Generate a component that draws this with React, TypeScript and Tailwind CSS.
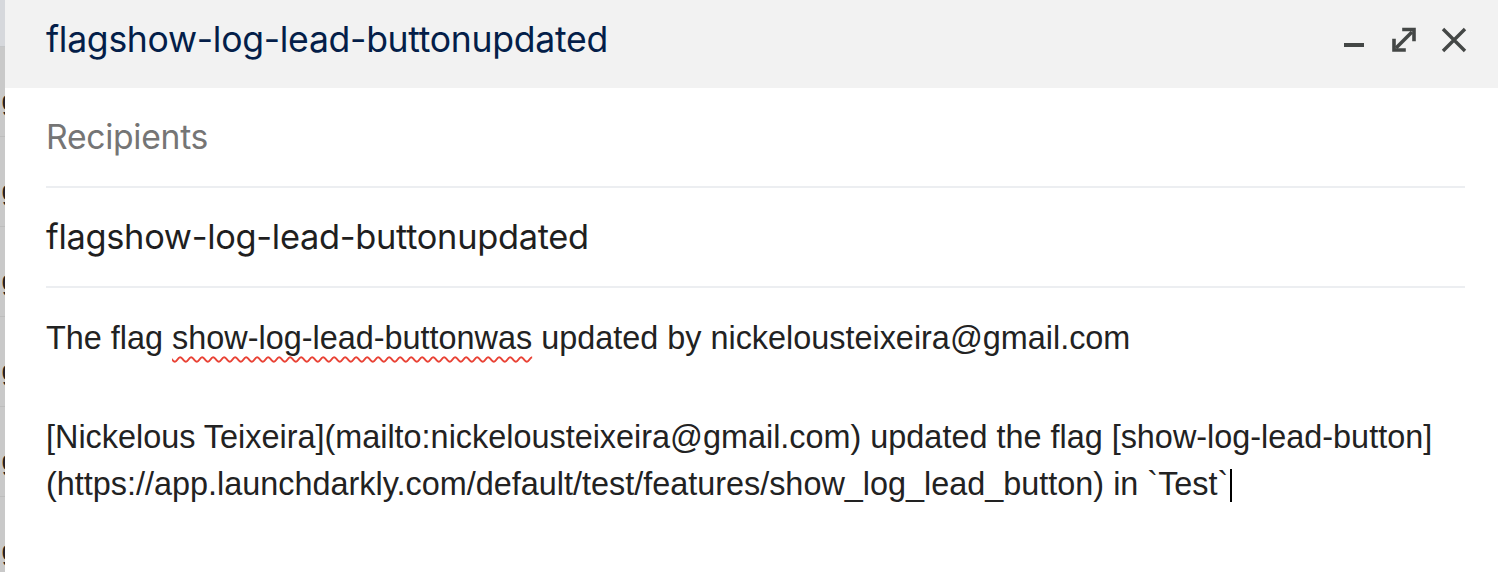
const strip = [0, 1, 2, 3, 4, 5];

function Minimize() {
  return (
    <svg width="28" height="28" viewBox="0 0 28 28">
      <rect x="4" y="17" width="20" height="4" fill="#444746" />
    </svg>
  );
}

function Expand() {
  return (
    <svg width="28" height="28" viewBox="0 0 28 28" fill="none" stroke="#444746" strokeWidth="3.6">
      <path d="M6 22 L22 6" />
      <path d="M14 3.5 H24 V13.5" strokeLinecap="square" />
      <path d="M4 14.5 V24 H14" strokeLinecap="square" />
    </svg>
  );
}

function Close() {
  return (
    <svg width="28" height="28" viewBox="0 0 28 28" fill="none" stroke="#444746" strokeWidth="3.4">
      <path d="M3 3 L25 25 M25 3 L3 25" />
    </svg>
  );
}

export default function App() {
  return (
    <div className="flex w-[1498px] h-[572px] overflow-hidden bg-white">
      {/* list behind the compose window */}
      <div className="w-[5px] shrink-0 flex flex-col bg-[#c9c9c9] overflow-hidden">
        <div className="h-[47px] shrink-0 bg-[#d6d8dc] border-b border-[#c4c6c8]" />
        {strip.map((i) => (
          <div
            key={i}
            className="h-[90px] shrink-0 flex items-start justify-end border-b border-[#bdbdbd] font-['Liberation_Sans',sans-serif] text-[28px] leading-none text-[#222]"
          >
            <span className="mt-[40px] -mr-[12px]">g</span>
          </div>
        ))}
      </div>

      <div className="flex-1 flex flex-col bg-white font-['Inter',sans-serif]">
        <div className="h-[88px] shrink-0 bg-[#f2f2f2] flex items-center pl-[41px] pr-[30px] pb-[8px]">
          <div className="flex-1 text-[35.6px] text-[#041e49] tracking-[-0.3px]">
            flagshow-log-lead-buttonupdated
          </div>
          <div className="flex items-center gap-[22px]">
            <Minimize />
            <Expand />
            <Close />
          </div>
        </div>

        <div className="pl-[41px] pr-[33px]">
          <div className="h-[100px] flex items-center border-b-2 border-[#eceef1] text-[33.7px] text-[#757575] tracking-[-0.3px]">
            Recipients
          </div>
          <div className="h-[100px] flex items-center border-b-2 border-[#eceef1] text-[34.4px] text-[#1f1f1f] tracking-[-0.3px]">
            flagshow-log-lead-buttonupdated
          </div>
          <div className="pt-[27px] font-['Liberation_Sans',sans-serif] text-[32.4px] leading-[47px] text-[#222]">
            <div>
              The flag{' '}
              <span className="underline decoration-wavy decoration-[#e94235] decoration-2 underline-offset-[7px]">
                show-log-lead-buttonwas
              </span>{' '}
              updated by nickelousteixeira@gmail.com
            </div>
            <div className="h-[52px]" />
            <div>
              [Nickelous Teixeira](mailto:nickelousteixeira@gmail.com) updated the flag [show-log-lead-button]
              (https://app.launchdarkly.com/default/test/features/show_log_lead_button) in `Test`
              <span className="inline-block w-[2px] h-[33px] bg-black align-[-7px] ml-[2px]" />
            </div>
          </div>
        </div>
      </div>
    </div>
  );
}
